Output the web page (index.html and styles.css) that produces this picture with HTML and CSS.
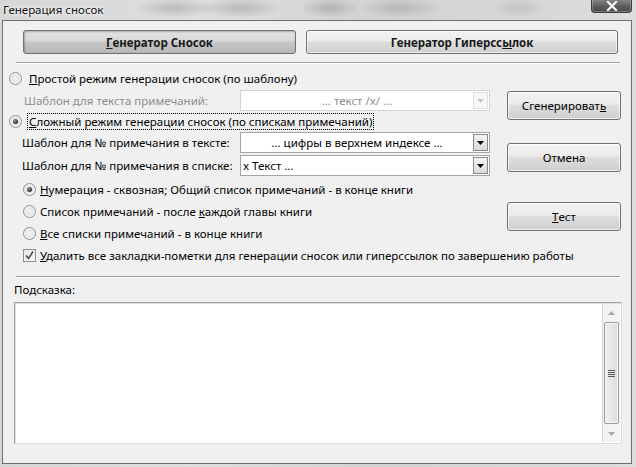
FILE: index.html
```html
<!DOCTYPE html>
<html lang="ru">
<head>
<meta charset="utf-8">
<title>Генерация сносок</title>
<link rel="stylesheet" href="styles.css">
</head>
<body>
<div class="window">
  <div class="titlebar">
    <span class="title">Генерация сносок</span>
    <div class="close">
      <svg width="14" height="10" viewBox="0 0 14 10"><path d="M3 1 L11 9 M11 1 L3 9" stroke="#fff" stroke-width="2.2" stroke-linecap="square"/></svg>
    </div>
  </div>
  <div class="dialog">
    <div class="tabs">
      <div class="tab pressed"><u>Г</u>енератор Сносок</div>
      <div class="tab">Генератор Гиперсс<u>ы</u>лок</div>
    </div>
    <div class="sep sep-top"></div>
    <div class="main">
      <div class="left">
        <div class="row radio-row r1"><span class="radio"></span><span class="rtext"><u>П</u>ростой режим генерации сносок (по шаблону)</span></div>
        <div class="row field-row disabled"><span class="flabel l1">Шаблон для текста примечаний:</span><div class="combo center">... текст /x/ ...<span class="arrow"><svg width="7" height="4" viewBox="0 0 7 4"><path d="M0 0H7L3.5 4Z" fill="#c4c4c4"/></svg></span></div></div>
        <div class="row radio-row r1"><span class="radio checked"></span><span class="rtext focus"><u>С</u>ложный режим генерации сносок (по спискам примечаний)</span></div>
        <div class="row field-row f2"><span class="flabel">Шаблон для № примечания в тексте:</span><div class="combo center">... цифры в верхнем индексе ...<span class="arrow"><svg width="7" height="4" viewBox="0 0 7 4"><path d="M0 0H7L3.5 4Z" fill="#000"/></svg></span></div></div>
        <div class="row field-row f3"><span class="flabel">Шаблон для № примечания в списке:</span><div class="combo">x Текст ...<span class="arrow"><svg width="7" height="4" viewBox="0 0 7 4"><path d="M0 0H7L3.5 4Z" fill="#000"/></svg></span></div></div>
        <div class="row radio-row r2 first"><span class="radio checked"></span><span class="rtext"><u>Н</u>умерация - сквозная; Общий список примечаний - в конце книги</span></div>
        <div class="row radio-row r2"><span class="radio"></span><span class="rtext">Список примечаний - после <u>к</u>аждой главы книги</span></div>
        <div class="row radio-row r2"><span class="radio"></span><span class="rtext"><u>В</u>се списки примечаний - в конце книги</span></div>
        <div class="row radio-row r2"><span class="check"><svg width="11" height="11" viewBox="0 0 11 11"><path d="M2 5.5 L4.5 8.5 L9 1.5" fill="none" stroke="#4a4a4a" stroke-width="1.6"/></svg></span><span class="rtext"><u>У</u>далить все закладки-пометки для генерации сносок или гиперссылок по завершению работы</span></div>
      </div>
      <div class="right">
        <div class="btn b1">Сгенерироват<u>ь</u></div>
        <div class="btn b2">Отмена</div>
        <div class="btn b3"><u>Т</u>ест</div>
      </div>
    </div>
    <div class="sep sep-bottom"></div>
    <div class="hint-label">Подсказка:</div>
    <div class="hint-box">
      <div class="hint-area"></div>
      <div class="scrollbar">
        <div class="sb-arrow"><svg width="7" height="4" viewBox="0 0 7 4"><path d="M0 4H7L3.5 0Z" fill="#a8a8a8"/></svg></div>
        <div class="sb-track"><div class="thumb"><span class="grip"></span></div></div>
        <div class="sb-arrow"><svg width="7" height="4" viewBox="0 0 7 4"><path d="M0 0H7L3.5 4Z" fill="#a8a8a8"/></svg></div>
      </div>
    </div>
  </div>
</div>
</body>
</html>
```

FILE: styles.css
```css
* { box-sizing: border-box; }
html, body { margin: 0; padding: 0; }
body {
  width: 636px;
  height: 467px;
  overflow: hidden;
  font-family: "Noto Sans", "Open Sans", sans-serif;
  font-size: 11.5px;
  color: #000;
  background:
    radial-gradient(ellipse 40px 10px at 175px 8px, rgba(120,120,120,0.35), transparent),
    radial-gradient(ellipse 40px 10px at 240px 8px, rgba(120,120,120,0.35), transparent),
    radial-gradient(ellipse 30px 10px at 330px 8px, rgba(110,110,110,0.35), transparent),
    radial-gradient(ellipse 40px 10px at 400px 8px, rgba(120,120,120,0.3), transparent),
    radial-gradient(ellipse 30px 10px at 520px 8px, rgba(140,140,140,0.25), transparent),
    linear-gradient(90deg, #d6d6d6 0%, #dedede 30%, #d2d2d2 60%, #dcdcdc 100%);
}
.window {
  width: 636px;
  height: 467px;
  display: flex;
  flex-direction: column;
}
.titlebar {
  height: 20px;
  display: flex;
  justify-content: space-between;
  align-items: flex-start;
  padding-left: 3px;
  padding-right: 4px;
}
.title {
  font-size: 11.5px;
  line-height: 20px;
  color: #111;
  text-shadow: 0 0 6px #fff, 0 0 3px #fff;
}
.close {
  width: 41px;
  height: 14px;
  margin-top: -1px;
  border: 1px solid #3c3c3c;
  border-top: none;
  border-radius: 0 0 4px 4px;
  background: linear-gradient(#8a8a8a, #5a5a5a 60%, #4a4a4a);
  display: flex;
  align-items: center;
  justify-content: center;
  box-shadow: inset 0 0 0 1px rgba(255,255,255,0.25);
}
.dialog {
  margin: 0 4px 0 2px;
  height: 444px;
  border: 1px solid #6e6e6e;
  background: #f0f0f0;
  display: flex;
  flex-direction: column;
}
.tabs {
  display: flex;
  gap: 10px;
  padding-left: 20px;
  margin-top: 9px;
}
.tab {
  height: 24px;
  border: 1px solid #707070;
  border-radius: 3px;
  background: linear-gradient(#f2f2f2 0%, #ebebeb 45%, #dddddd 50%, #cfcfcf 100%);
  box-shadow: inset 0 0 0 1px rgba(255,255,255,0.6);
  font-weight: bold;
  display: flex;
  align-items: center;
  justify-content: center;
  color: #1a1a1a;
}
.tab:first-child { width: 273px; }
.tab:last-child { width: 312px; }
.tab.pressed {
  background: linear-gradient(#e4e4e4 0%, #d8d8d8 45%, #c6c6c6 50%, #b8b8b8 100%);
  box-shadow: inset 1px 1px 2px rgba(0,0,0,0.25);
}
.sep {
  height: 2px;
  border-top: 1px solid #a0a0a0;
  border-bottom: 1px solid #ffffff;
  margin-left: 13px;
  width: 604px;
}
.sep-top { margin-top: 8px; }
.main {
  display: flex;
  margin-top: 4px;
}
.left {
  width: 492px;
  flex: none;
  padding-left: 6px;
  display: flex;
  flex-direction: column;
}
.row {
  display: flex;
  align-items: center;
  white-space: nowrap;
}
.radio-row.r1 { height: 20px; }
.radio-row.r2 { height: 22px; padding-left: 14px; }
.radio-row.r2 .rtext { margin-left: 3px; }
.radio-row.r2.first { margin-top: 2px; }
.field-row { height: 21px; margin-top: 2px; }
.field-row.disabled { color: #8d8d8d; }
.field-row.f2 { margin-top: 1px; }
.radio {
  width: 13px;
  height: 13px;
  border-radius: 50%;
  border: 1px solid #8f8f8f;
  background: radial-gradient(circle at 50% 50%, #f4f4f4 0%, #e2e2e2 60%, #d0d0d0 100%);
  box-shadow: inset 0 0 0 1px #f8f8f8;
  flex: none;
  display: flex;
  align-items: center;
  justify-content: center;
}
.radio.checked::after {
  content: "";
  width: 5px;
  height: 5px;
  border-radius: 50%;
  background: radial-gradient(circle at 40% 35%, #9a9a9a, #2a2a2a 70%);
}
.check {
  width: 13px;
  height: 13px;
  border: 1px solid #8f8f8f;
  background: linear-gradient(135deg, #e8e8e8, #fafafa);
  flex: none;
  display: flex;
  align-items: center;
  justify-content: center;
}
.rtext {
  margin-left: 6px;
  line-height: 15px;
  padding: 0 1px;
}
.rtext.focus {
  outline: 1px dotted #000;
  outline-offset: 0;
}
.flabel {
  width: 231px;
  padding-left: 13px;
  flex: none;
}
.flabel.l1 { padding-left: 15px; }
.combo {
  position: relative;
  width: 250px;
  flex: none;
  height: 21px;
  border: 1px solid #a5a5a5;
  background: #fff;
  display: flex;
  align-items: center;
  padding-left: 2px;
  padding-right: 18px;
  color: #000;
}
.disabled .combo { border-color: #d4d4d4; color: #8d8d8d; }
.combo.center { justify-content: center; }
.arrow {
  position: absolute;
  right: 1px;
  top: 1px;
  width: 15px;
  height: 17px;
  border: 1px solid #8a8a8a;
  background: linear-gradient(#f4f4f4, #dadada);
  display: flex;
  align-items: center;
  justify-content: center;
}
.disabled .arrow { border-color: #e0e0e0; background: #f7f7f7; }
.right {
  margin-left: 12px;
  display: flex;
  flex-direction: column;
}
.btn {
  width: 114px;
  height: 29px;
  border: 1px solid #707070;
  border-radius: 3px;
  background: linear-gradient(#f2f2f2 0%, #ebebeb 45%, #dddddd 50%, #cfcfcf 100%);
  box-shadow: inset 0 0 0 1px rgba(255,255,255,0.7);
  display: flex;
  align-items: center;
  justify-content: center;
}
.b1 { margin-top: 23px; }
.b2 { margin-top: 23px; }
.b3 { margin-top: 30px; }
.sep-bottom { margin-top: 10px; }
.hint-label {
  height: 17px;
  margin-top: 3px;
  margin-left: 11px;
  line-height: 17px;
}
.hint-box {
  margin-top: 4px;
  margin-left: 11px;
  width: 608px;
  height: 142px;
  border: 1px solid #a0a0a0;
  border-right-color: #dcdcdc;
  border-bottom-color: #dcdcdc;
  background: #fff;
  display: flex;
  box-shadow: inset 1px 1px 0 #e3e3e3;
}
.hint-area { flex: 1; }
.scrollbar {
  width: 18px;
  margin: 1px 1px 1px 0;
  border-left: 1px solid #d8d8d8;
  background: #f3f3f3;
  display: flex;
  flex-direction: column;
}
.sb-arrow {
  height: 17px;
  display: flex;
  align-items: center;
  justify-content: center;
}
.sb-track {
  flex: 1;
  padding: 1px 1px;
  display: flex;
}
.thumb {
  flex: 1;
  border: 1px solid #9a9a9a;
  border-radius: 2px;
  background: linear-gradient(90deg, #f0f0f0, #dcdcdc);
  box-shadow: inset 0 0 0 1px #f8f8f8;
  display: flex;
  align-items: center;
  justify-content: center;
}
.grip {
  width: 7px;
  height: 7px;
  background: repeating-linear-gradient(#5a5a5a 0 1px, transparent 1px 2px);
}
```
